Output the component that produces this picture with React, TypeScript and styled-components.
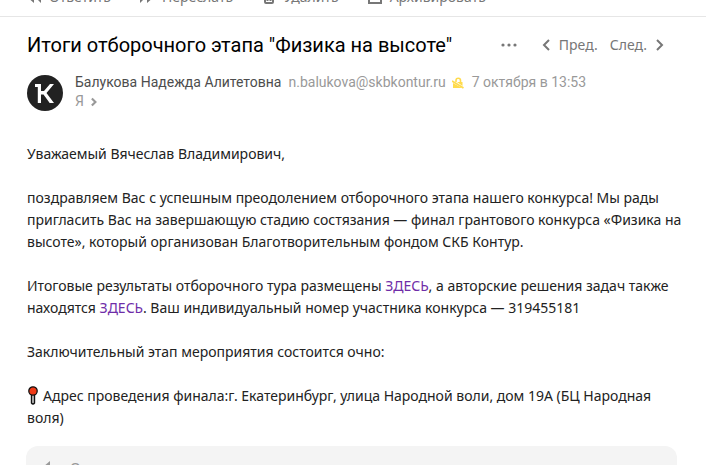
import React from "react";
import styled, { createGlobalStyle } from "styled-components";

const GlobalStyle = createGlobalStyle`
  * { box-sizing: border-box; }
  body { margin: 0; background: #fff; overflow: hidden; font-family: "Noto Sans", sans-serif; }
`;

const Page = styled.main`
  height: 100vh;
  overflow: hidden;
  display: flex;
  flex-direction: column;
`;

const Toolbar = styled.nav`
  flex: none;
  height: 17px;
  overflow: hidden;
  display: flex;
  align-items: flex-end;
  gap: 29px;
  padding: 0 27px 9px;
  border-bottom: 1px solid #e6e6e6;
`;

const PlainButton = styled.button`
  display: flex;
  align-items: center;
  gap: 8px;
  padding: 0;
  border: 0;
  background: none;
  color: #777;
  font: 14px/20px "Noto Sans", sans-serif;
  white-space: nowrap;
  cursor: pointer;
  svg { flex: none; }
`;

const Message = styled.article`
  flex: none;
  padding: 14px 20px 0 27px;
`;

const TitleRow = styled.header`
  display: flex;
  align-items: center;
  padding-right: 22px;
`;

const Title = styled.h1`
  flex: 1;
  margin: 0;
  color: #000;
  font: 400 20px/28px Roboto, "Noto Sans", sans-serif;
  white-space: nowrap;
`;

const Pager = styled.div`
  display: flex;
  gap: 12px;
  margin-left: 25px;
`;

const PagerButton = styled(PlainButton)`
  gap: 9px;
`;

const Sender = styled.section`
  display: flex;
  gap: 12px;
  margin-top: 14px;
`;

const Avatar = styled.svg`
  flex: none;
  margin-top: 2px;
`;

const SenderLine = styled.div`
  display: flex;
  align-items: center;
  color: #999;
  font: 14px/19px Roboto, "Noto Sans", sans-serif;
  white-space: nowrap;
`;

const Name = styled.span`
  color: #4d4d4d;
  margin-right: 7px;
`;

const Warning = styled.svg`
  margin: 0 8px 0 6px;
`;

const Recipient = styled(PlainButton)`
  gap: 7px;
  color: #999;
  font: 14px/19px Roboto, "Noto Sans", sans-serif;
`;

const Body = styled.div`
  margin-top: 32px;
  color: #222;
  font: 14px/22px "Noto Sans", sans-serif;
`;

const Paragraph = styled.p`
  margin: 0 0 22px;

  &:last-child {
    margin-bottom: 17px;
  }
`;

const BodyLink = styled.a`
  color: #6f2da8;
  text-decoration: none;
`;

const Pin = styled.svg`
  vertical-align: -4px;
  margin-right: 4px;
`;

const Reply = styled.section`
  flex: none;
  margin: 0 29px 0 26px;
  padding: 12px 16px;
  border-radius: 12px;
  background: #f4f4f4;
`;

const ReplyButton = styled(PlainButton)`
  gap: 16px;
  color: #999;
`;

const Chevron = ({ left = false, size = 14, width = 2 }: { left?: boolean; size?: number; width?: number }) => (
  <svg width={size / 2 + 1} height={size} viewBox="0 0 8 14" fill="none" stroke="currentColor" strokeWidth={width} aria-hidden="true">
    <path d={left ? "M7 2 2 7l5 5" : "m1 2 5 5-5 5"} />
  </svg>
);

const ReplyArrow = () => (
  <svg width="14" height="14" viewBox="0 0 14 14" fill="currentColor" aria-hidden="true">
    <path d="M7 1v12L0 7zM14 1v12l-3-3-4-3z" />
  </svg>
);

const ForwardArrow = () => (
  <svg width="14" height="14" viewBox="0 0 14 14" fill="currentColor" aria-hidden="true">
    <path d="M7 1v12l7-6zM0 1v12l3-3 4-3z" />
  </svg>
);

const Trash = () => (
  <svg width="14" height="14" viewBox="0 0 14 14" fill="none" stroke="currentColor" strokeWidth="2" aria-hidden="true">
    <path d="M1 3h12M5 1h4M3 3v9q0 1 1 1h6q1 0 1-1V3M5.500 6v5M8.500 6v5" />
  </svg>
);

const Archive = () => (
  <svg width="14" height="14" viewBox="0 0 14 14" fill="none" stroke="currentColor" strokeWidth="2" aria-hidden="true">
    <path d="M1 1h12v12H1zM1 5h12M5 8h4" />
  </svg>
);

export default function App() {
  return (
    <>
      <GlobalStyle />
      <Page>
        <Toolbar>
          <PlainButton><ReplyArrow />Ответить</PlainButton>
          <PlainButton><ForwardArrow />Переслать</PlainButton>
          <PlainButton><Trash />Удалить</PlainButton>
          <PlainButton><Archive />Архивировать</PlainButton>
        </Toolbar>
        <Message>
          <TitleRow>
            <Title>Итоги отборочного этапа "Физика на высоте"</Title>
            <PlainButton aria-label="Ещё">
              <svg width="16" height="4" viewBox="0 0 16 4" fill="currentColor" aria-hidden="true">
                <circle cx="2" cy="2" r="1.600" /><circle cx="8" cy="2" r="1.600" /><circle cx="14" cy="2" r="1.600" />
              </svg>
            </PlainButton>
            <Pager>
              <PagerButton><Chevron left />Пред.</PagerButton>
              <PagerButton>След.<Chevron /></PagerButton>
            </Pager>
          </TitleRow>
          <Sender>
            <Avatar width="36" height="36" viewBox="0 0 36 36" aria-hidden="true">
              <circle cx="18" cy="18" r="18" fill="#222" />
              <path d="M8 9h6v7h3l6-7h4l-7.500 9 7.500 10h-4.300L16.500 19.500H14V28h-3.200V12H8z" fill="#fff" />
            </Avatar>
            <div>
              <SenderLine>
                <Name>Балукова Надежда Алитетовна</Name>
                <span>n.balukova@skbkontur.ru</span>
                <Warning width="12" height="12" viewBox="0 0 12 12" aria-hidden="true">
                  <path d="M4 5V3.500a2.200 2.200 0 0 1 4.500 0V6" fill="none" stroke="#ffdb4d" strokeWidth="1.600" />
                  <path d="M1 6v5h9zM5 5h5.500v4z" fill="#ffdb4d" />
                  <path d="m0 4 11.500 7" stroke="#ffdb4d" strokeWidth="1.800" />
                </Warning>
                <time>7 октября в 13:53</time>
              </SenderLine>
              <Recipient>Я<Chevron size={10} width={3} /></Recipient>
            </div>
          </Sender>
          <Body>
            <Paragraph>Уважаемый Вячеслав Владимирович,</Paragraph>
            <Paragraph>
              поздравляем Вас с успешным преодолением отборочного этапа нашего конкурса! Мы рады пригласить Вас на
              завершающую стадию состязания — финал грантового конкурса «Физика на высоте», который организован
              Благотворительным фондом СКБ Контур.
            </Paragraph>
            <Paragraph>
              Итоговые результаты отборочного тура размещены <BodyLink href="#results">ЗДЕСЬ</BodyLink>, а авторские
              решения задач также находятся <BodyLink href="#solutions">ЗДЕСЬ</BodyLink>. Ваш индивидуальный номер
              участника конкурса — 319455181
            </Paragraph>
            <Paragraph>Заключительный этап мероприятия состоится очно:</Paragraph>
            <Paragraph>
              <Pin width="12" height="19" viewBox="0 0 12 19" aria-hidden="true">
                <path d="M4.500 8h3v9q-1.500 2-3 0z" fill="#ccc" stroke="#111" strokeWidth="1.400" />
                <circle cx="6" cy="5" r="4.200" fill="#f03a17" stroke="#111" strokeWidth="1.300" />
              </Pin>
              Адрес проведения финала:г. Екатеринбург, улица Народной воли, дом 19А (БЦ Народная воля)
            </Paragraph>
          </Body>
        </Message>
        <Reply>
          <ReplyButton>
            <svg width="12" height="14" viewBox="0 0 12 14" fill="currentColor" aria-hidden="true">
              <path d="M8 0v12L1 6z" />
            </svg>
            Ответить
          </ReplyButton>
        </Reply>
      </Page>
    </>
  );
}
